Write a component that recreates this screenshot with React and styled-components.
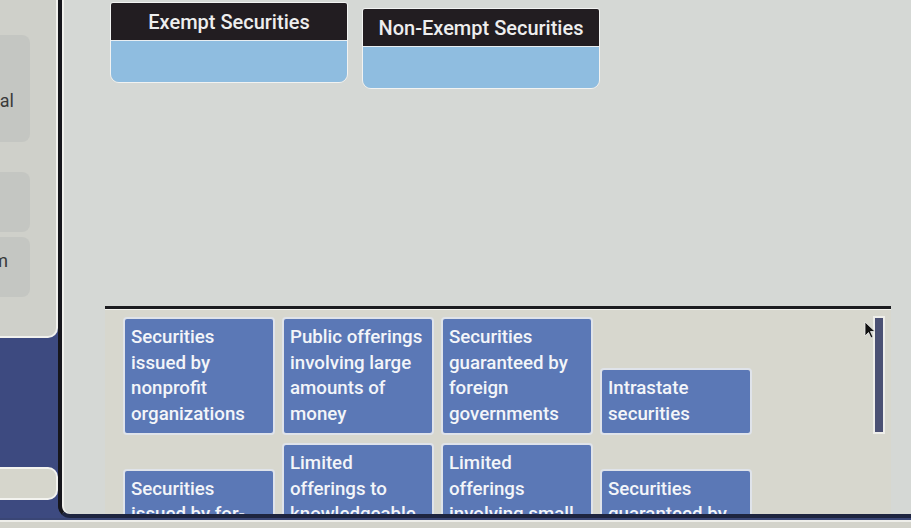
import React from 'react';
import styled, { createGlobalStyle } from 'styled-components';

const GlobalStyle = createGlobalStyle`
    html, body {
        margin: 0;
        padding: 0;
    }
    body {
        font-family: Roboto, "Liberation Sans", Arial, sans-serif;
    }
`;

const Page = styled.div`
    width: 911px;
    height: 528px;
    overflow: hidden;
    display: flex;
    flex-direction: column;
    background-color: #3d4a80;
`;

const Body = styled.div`
    display: flex;
    height: 518px;
`;

const Sidebar = styled.aside`
    width: 58px;
    display: flex;
    flex-direction: column;
    overflow: hidden;
`;

const SidePanel = styled.div`
    height: 338px;
    box-sizing: border-box;
    padding-top: 35px;
    display: flex;
    flex-direction: column;
    background-color: #cfd0ca;
    border-right: 2px solid #f1f1ee;
    border-bottom: 2px solid #f1f1ee;
    border-bottom-right-radius: 10px;
`;

const SideButton = styled.div`
    display: flex;
    align-items: center;
    justify-content: flex-end;
    width: 122px;
    height: ${p => p.$height}px;
    margin-top: ${p => p.$gap || 0}px;
    margin-left: -92px;
    padding-right: ${p => p.$pad}px;
    padding-top: ${p => p.$pt || 0}px;
    padding-bottom: ${p => p.$pb || 0}px;
    box-sizing: border-box;
    border-radius: 8px;
    background-color: #c4c6c2;
    color: #3a3a3a;
    font-size: 18px;
    white-space: nowrap;
`;

const SidePill = styled.div`
    height: 33px;
    margin-top: auto;
    margin-bottom: 18px;
    margin-left: -20px;
    box-sizing: border-box;
    border: 2px solid #f3f3ef;
    border-radius: 10px;
    background-color: #d6d6cc;
`;

const Main = styled.main`
    flex: 1;
    display: flex;
    flex-direction: column;
    background-color: #d5d8d5;
    border-left: 4px solid #16161c;
    border-bottom: 4px solid #1e2540;
    border-bottom-left-radius: 12px;
    box-shadow: inset 2px 0 0 #f0f0ec;
    overflow: hidden;
`;

const CategoryRow = styled.div`
    height: 306px;
    flex-shrink: 0;
    display: flex;
    align-items: flex-start;
    gap: 14px;
    padding-left: 48px;
`;

const Category = styled.section`
    width: 236px;
    margin-top: ${p => p.$top}px;
    border: 1px solid #f2f3f2;
    border-radius: 3px 3px 9px 9px;
    overflow: hidden;
`;

const CategoryTitle = styled.h3`
    margin: 0;
    height: 37px;
    display: flex;
    align-items: center;
    justify-content: center;
    background-color: #221d21;
    color: #eeeeee;
    font-size: 20px;
    font-weight: 500;
`;

const CategoryDrop = styled.div`
    height: 41px;
    background-color: #8fbde0;
    border-top: 1px solid #e8eef2;
`;

const Bank = styled.div`
    position: relative;
    flex: 1;
    margin-left: 43px;
    width: 786px;
    display: flex;
    background-color: #d7d7ce;
    border-top: 3px solid #1c1c20;
    box-shadow: inset 0 1px 0 #f2f2ee;
`;

const CardArea = styled.div`
    flex: 1;
    display: flex;
    flex-direction: column;
    gap: 8px;
    padding: 8px 0 0 18px;
`;

const CardRow = styled.div`
    display: flex;
    align-items: flex-end;
    gap: 7px;
`;

const Card = styled.div`
    width: 152px;
    box-sizing: border-box;
    padding: 6px;
    background-color: #5b78b6;
    border: 2px solid #dfe3ea;
    border-radius: 4px;
    color: #f3f5f9;
    font-size: 18.7px;
    font-weight: 500;
    line-height: 25.5px;

    span{
        display: block;
        white-space: nowrap;
    }
`;

const ScrollTrack = styled.div`
    width: 18px;
    padding-top: 7px;
    display: flex;
    justify-content: flex-start;
`;

const ScrollThumb = styled.div`
    width: 12px;
    height: 118px;
    box-sizing: border-box;
    background-color: #4b5174;
    border: 2px solid #eeeeea;
`;

const Cursor = styled.svg`
    position: absolute;
    left: 759px;
    top: 12px;
`;

const Footer = styled.footer`
    height: 10px;
    border-top: 2px solid #3a4675;
    box-shadow: inset 0 2px 0 #eeeeea;
    background-color: #d3d3cb;
`;

const rows = [
    [
        ['Securities', 'issued by', 'nonprofit', 'organizations'],
        ['Public offerings', 'involving large', 'amounts of', 'money'],
        ['Securities', 'guaranteed by', 'foreign', 'governments'],
        ['Intrastate', 'securities'],
    ],
    [
        ['Securities', 'issued by for-', 'profit firms'],
        ['Limited', 'offerings to', 'knowledgeable', 'investors'],
        ['Limited', 'offerings', 'involving small', 'amounts'],
        ['Securities', 'guaranteed by', 'banks'],
    ],
];

export default function App() {
    return (
        <>
            <GlobalStyle />
            <Page>
                <Body>
                    <Sidebar>
                        <SidePanel>
                            <SideButton $height={107} $pad={16} $pt={24}>Journal</SideButton>
                            <SideButton $height={60} $gap={30} $pad={20}></SideButton>
                            <SideButton $height={60} $gap={5} $pad={22} $pb={14}>Exam</SideButton>
                        </SidePanel>
                        <SidePill />
                    </Sidebar>
                    <Main>
                        <CategoryRow>
                            <Category $top={2}>
                                <CategoryTitle>Exempt Securities</CategoryTitle>
                                <CategoryDrop />
                            </Category>
                            <Category $top={8}>
                                <CategoryTitle>Non-Exempt Securities</CategoryTitle>
                                <CategoryDrop />
                            </Category>
                        </CategoryRow>
                        <Bank>
                            <CardArea>
                                {rows.map((row, r) => (
                                    <CardRow key={r}>
                                        {row.map((lines, i) => (
                                            <Card key={i}>
                                                {lines.map(l => <span key={l}>{l}</span>)}
                                            </Card>
                                        ))}
                                    </CardRow>
                                ))}
                            </CardArea>
                            <ScrollTrack>
                                <ScrollThumb />
                            </ScrollTrack>
                            <Cursor width="12" height="18" viewBox="0 0 12 18">
                                <path d="M1 1 L1 15 L4.5 11.5 L7 17 L9 16 L6.5 10.5 L11 10.5 Z" fill="#111" stroke="#eee" strokeWidth="0.8" />
                            </Cursor>
                        </Bank>
                    </Main>
                </Body>
                <Footer />
            </Page>
        </>
    );
}
